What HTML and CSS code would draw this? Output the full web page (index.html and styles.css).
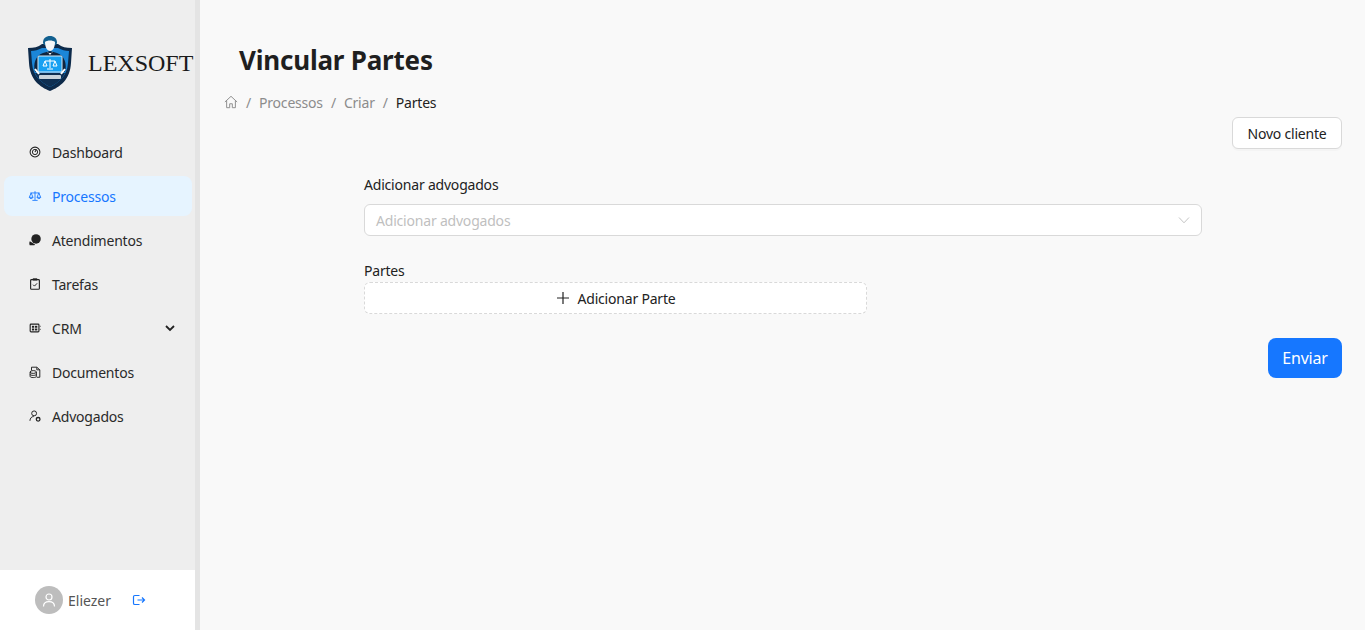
FILE: index.html
```html
<!DOCTYPE html>
<html lang="pt-BR">
<head>
    <meta charset="UTF-8">
    <title>Vincular Partes</title>
    <link rel="stylesheet" href="styles.css">
</head>
<body>
    <div class="layout">
        <aside class="sidebar">
            <div class="logo">
                <svg class="logo-mark" viewBox="0 0 46 56" width="46" height="56">
                    <path d="M23 55C13 51 3 44 2 27L1 12C7 12 11 11 15 8H31C35 11 39 12 45 12L44 27C43 44 33 51 23 55Z" fill="#0d2a4a"/>
                    <path d="M23 51C15 47 6 41 5 27L4 15C8 15 11 14 15 12H31C35 14 38 15 42 15L41 27C40 41 31 47 23 51Z" fill="#1b86d8"/>
                    <path d="M23 51C17 48 11 44 8 37H38C35 44 29 48 23 51Z" fill="#0e2f52"/>
                    <path d="M8 36C6 28 8 20 16 17L23 15L30 17C38 20 40 28 38 36Z" fill="#10253f"/>
                    <path d="M16 7C16 2 19 0 23 0C27 0 30 2 30 7L29 9H17Z" fill="#12608f"/>
                    <path d="M18 6C20 4 26 4 28 6C28 11 26 15 23 15C20 15 18 11 18 6Z" fill="#f4f6f8"/>
                    <path d="M20 15L23 19L26 15L25 17H21Z" fill="#ffffff"/>
                    <rect x="11" y="20" width="24" height="16" rx="1" fill="#17a0f2" stroke="#d9ecf8"/>
                    <path d="M23 23V32M18 25H28M18 25L16 30H20ZM28 25L26 30H30ZM20 33H26" stroke="#ffffff" fill="none" stroke-width="1"/>
                    <rect x="12" y="39" width="22" height="4" rx="1" fill="#c9d4dc"/>
                    <path d="M8 33L12 38M38 33L34 38" stroke="#ffffff" stroke-width="2"/>
                </svg>
                <span class="logo-text">LEXSOFT</span>
            </div>

            <nav class="menu">
                <a class="menu-item">
                    <svg class="icon" viewBox="0 0 16 16"><circle cx="8" cy="8" r="5.6" fill="none" stroke="#222" stroke-width="1.2"/><circle cx="8" cy="8" r="3" fill="none" stroke="#222" stroke-width="1.1"/><path d="M8 8L9.6 5" stroke="#222" stroke-width="1.2"/></svg>
                    <span>Dashboard</span>
                </a>
                <a class="menu-item active">
                    <svg class="icon" viewBox="0 0 16 16"><path d="M8 2.5V12.5M5 13H11M2.8 4.5H13.2M3.6 4.5L1.5 9.5H5.7ZM12.4 4.5L10.3 9.5H14.5ZM1.5 9.5C2 11.5 5.2 11.5 5.7 9.5M10.3 9.5C10.8 11.5 14 11.5 14.5 9.5" fill="none" stroke="#1677ff" stroke-width="1"/></svg>
                    <span>Processos</span>
                </a>
                <a class="menu-item">
                    <svg class="icon" viewBox="0 0 16 16"><circle cx="9.2" cy="6.8" r="5.4" fill="#222"/><path d="M2 9.5C1.2 11.5 1.5 13 2 14L6.5 14C7.5 14 8 13.4 8 13L4 10.5Z" fill="#222"/></svg>
                    <span>Atendimentos</span>
                </a>
                <a class="menu-item">
                    <svg class="icon" viewBox="0 0 16 16"><rect x="3" y="3" width="10" height="11" rx="1" fill="none" stroke="#222" stroke-width="1.3"/><rect x="5.5" y="1.5" width="5" height="2.5" fill="#222"/><path d="M5.8 8.8L7.4 10.4L10.4 7.2" fill="none" stroke="#222" stroke-width="1.1"/></svg>
                    <span>Tarefas</span>
                </a>
                <a class="menu-item">
                    <svg class="icon" viewBox="0 0 16 16"><rect x="2.5" y="3.5" width="10" height="9" rx="1" fill="none" stroke="#222" stroke-width="1.3"/><rect x="4.5" y="5.5" width="2.6" height="2.2" fill="#222"/><rect x="8" y="5.5" width="2.6" height="2.2" fill="#222"/><rect x="4.5" y="8.6" width="2.6" height="2.2" fill="#222"/><rect x="8" y="8.6" width="2.6" height="2.2" fill="#222"/><path d="M14 5.5V6.5M14 9V10" stroke="#222"/></svg>
                    <span>CRM</span>
                    <svg class="caret" viewBox="0 0 12 12"><path d="M2 4L6 8L10 4" fill="none" stroke="#222" stroke-width="1.8"/></svg>
                </a>
                <a class="menu-item">
                    <svg class="icon" viewBox="0 0 16 16"><path d="M4 6V2.5H10L13.5 5.5V14H10" fill="none" stroke="#222" stroke-width="1.1"/><path d="M10 2.5V5.5H13.5" fill="none" stroke="#222"/><ellipse cx="6" cy="8" rx="3.6" ry="1.6" fill="none" stroke="#222" stroke-width="1.1"/><path d="M2.4 8V13C2.4 14.8 9.6 14.8 9.6 13V8M2.4 10.6C2.4 12.3 9.6 12.3 9.6 10.6" fill="none" stroke="#222" stroke-width="1.1"/></svg>
                    <span>Documentos</span>
                </a>
                <a class="menu-item">
                    <svg class="icon" viewBox="0 0 16 16"><circle cx="7" cy="5" r="2.8" fill="none" stroke="#222" stroke-width="1.1"/><path d="M2.2 13.5C2.4 10.5 4 8.6 6.6 8.6" fill="none" stroke="#222" stroke-width="1.1"/><circle cx="11.6" cy="11.8" r="2.1" fill="none" stroke="#222" stroke-width="1.5"/></svg>
                    <span>Advogados</span>
                </a>
            </nav>

            <div class="user-box">
                <span class="avatar">
                    <svg viewBox="0 0 16 16" width="16" height="16"><circle cx="8" cy="5" r="3" fill="none" stroke="#fff" stroke-width="1.2"/><path d="M2.5 14.5C2.5 11 5 9.6 8 9.6C11 9.6 13.5 11 13.5 14.5" fill="none" stroke="#fff" stroke-width="1.2"/></svg>
                </span>
                <span class="user-name">Eliezer</span>
                <svg class="logout" viewBox="0 0 14 14"><path d="M7.5 2.5H2.8C2 2.5 1.5 3 1.5 3.8V10.2C1.5 11 2 11.5 2.8 11.5H7.5M5.5 7H12.5M10 4.5L12.5 7L10 9.5" fill="none" stroke="#1677ff" stroke-width="1.2"/></svg>
            </div>
        </aside>

        <main class="content">
            <h1 class="page-title">Vincular Partes</h1>
            <div class="breadcrumb">
                <svg class="home" viewBox="0 0 16 16"><path d="M1 8L8 1.5L15 8M3 6.5V14.5H6.5V10H9.5V14.5H13V6.5" fill="none" stroke="#8c8c8c" stroke-width="1.1"/></svg>
                <span class="sep">/</span>
                <span>Processos</span>
                <span class="sep">/</span>
                <span>Criar</span>
                <span class="sep">/</span>
                <span class="current">Partes</span>
            </div>

            <div class="top-actions">
                <button class="btn">Novo cliente</button>
            </div>

            <form class="form">
                <label class="field-label">Adicionar advogados</label>
                <div class="select">
                    <span class="placeholder">Adicionar advogados</span>
                    <svg class="select-arrow" viewBox="0 0 12 12"><path d="M1 3.5L6 8.8L11 3.5" fill="none" stroke="#c4c4c4" stroke-width="1"/></svg>
                </div>
                <label class="field-label partes-label">Partes</label>
                <button type="button" class="btn-dashed">
                    <svg viewBox="0 0 14 14" width="14" height="14"><path d="M7 1V13M1 7H13" stroke="#222" stroke-width="1.2"/></svg>
                    <span>Adicionar Parte</span>
                </button>
            </form>

            <div class="submit-row">
                <button class="btn-primary">Enviar</button>
            </div>
        </main>
    </div>
</body>
</html>
```

FILE: styles.css
```css
* {
    box-sizing: border-box;
}
body {
    font-family: "Noto Sans", Arial, sans-serif;
    font-size: 14px;
    margin: 0;
    background-color: #f9f9f9;
    color: #222;
}
.layout {
    display: flex;
    height: 630px;
    overflow: hidden;
}
.sidebar {
    width: 200px;
    flex: none;
    display: flex;
    flex-direction: column;
    background: #eeeeee;
    border-right: 5px solid #e4e4e4;
}
.logo {
    height: 132px;
    padding: 36px 0 0 27px;
    display: flex;
    align-items: flex-start;
}
.logo-mark {
    flex: none;
}
.logo-text {
    font-family: "Liberation Serif", serif;
    font-size: 24px;
    line-height: 54px;
    margin-left: 15px;
    color: #1a1a1a;
}
.menu {
    flex: 1;
    padding: 0 3px 0 4px;
}
.menu-item {
    display: flex;
    align-items: center;
    height: 40px;
    margin-bottom: 4px;
    padding-left: 24px;
    padding-right: 16px;
    border-radius: 8px;
    letter-spacing: -0.2px;
    color: #2a2a2a;
}
.menu-item.active {
    background: #e6f4ff;
    color: #1677ff;
}
.icon {
    width: 14px;
    height: 14px;
    margin-right: 10px;
    flex: none;
}
.caret {
    width: 12px;
    height: 12px;
    margin-left: auto;
}
.user-box {
    height: 60px;
    background: #fff;
    display: flex;
    align-items: center;
    padding-left: 35px;
}
.avatar {
    width: 28px;
    height: 28px;
    border-radius: 50%;
    background: #bdbdbd;
    display: flex;
    align-items: center;
    justify-content: center;
}
.user-name {
    margin-left: 5px;
    color: #555;
}
.logout {
    width: 14px;
    height: 14px;
    margin-left: 21px;
}
.content {
    flex: 1;
    padding: 0 23px 0 24px;
}
.page-title {
    font-size: 26px;
    line-height: 36px;
    margin: 42px 0 0 15px;
    color: #1f1f1f;
    letter-spacing: -0.2px;
}
.breadcrumb {
    display: flex;
    align-items: center;
    gap: 8px;
    height: 22px;
    margin-top: 13px;
    color: #8c8c8c;
    letter-spacing: -0.2px;
}
.home {
    width: 14px;
    height: 14px;
}
.current {
    color: #222;
}
.top-actions {
    display: flex;
    justify-content: flex-end;
    margin-top: 4px;
}
.btn {
    width: 110px;
    height: 32px;
    background: #fff;
    border: 1px solid #d9d9d9;
    border-radius: 6px;
    font: inherit;
    letter-spacing: -0.2px;
    color: #222;
    box-shadow: 0 2px 0 rgba(0,0,0,0.02);
}
.form {
    width: 838px;
    margin: 25px 0 0 140px;
}
.field-label {
    display: block;
    line-height: 22px;
    letter-spacing: -0.2px;
}
.select {
    display: flex;
    align-items: center;
    justify-content: space-between;
    height: 32px;
    margin-top: 8px;
    padding: 0 11px;
    background: #fff;
    border: 1px solid #d9d9d9;
    border-radius: 6px;
}
.placeholder {
    color: #bfbfbf;
    letter-spacing: -0.2px;
}
.select-arrow {
    width: 12px;
    height: 12px;
}
.partes-label {
    margin-top: 24px;
}
.btn-dashed {
    display: flex;
    align-items: center;
    justify-content: center;
    gap: 8px;
    width: 503px;
    height: 32px;
    background: #fff;
    border: 1px dashed #d9d9d9;
    border-radius: 6px;
    font: inherit;
    letter-spacing: -0.2px;
    color: #222;
}
.submit-row {
    display: flex;
    justify-content: flex-end;
    margin-top: 24px;
}
.btn-primary {
    width: 74px;
    height: 40px;
    background: #1677ff;
    border: none;
    border-radius: 8px;
    font: inherit;
    font-size: 16px;
    color: #fff;
    letter-spacing: -0.2px;
}
```
